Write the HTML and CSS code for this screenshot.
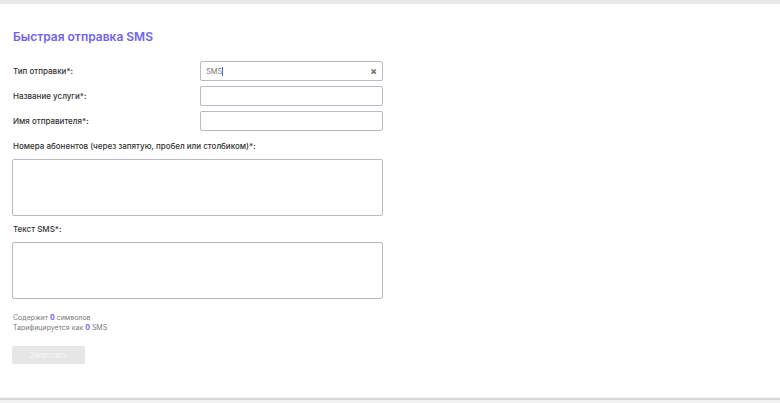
FILE: index.html
```html
<!DOCTYPE html>
<html lang="ru">
<head>
    <meta charset="UTF-8">
    <meta name="viewport" content="width=device-width, initial-scale=1.0">
    <title>Быстрая отправка SMS</title>
    <link rel="stylesheet" href="styles.css">
</head>
<body>
    <div class="top-bar"></div>
    <div class="card">
        <h1>Быстрая отправка SMS</h1>
        <div class="row">
            <label>Тип отправки*:</label>
            <div class="field select">
                <span class="value">SMS</span><span class="caret"></span>
                <span class="clear">&#215;</span>
            </div>
        </div>
        <div class="row">
            <label>Название услуги*:</label>
            <div class="field"></div>
        </div>
        <div class="row">
            <label>Имя отправителя*:</label>
            <div class="field"></div>
        </div>
        <label class="block-label">Номера абонентов (через запятую, пробел или столбиком)*:</label>
        <div class="area"></div>
        <label class="block-label">Текст SMS*:</label>
        <div class="area"></div>
        <div class="stats">
            <div>Содержит <b>0</b> символов</div>
            <div>Тарифицируется как <b>0</b> SMS</div>
        </div>
        <button class="run" disabled>Запустить</button>
    </div>
    <div class="bottom-line"></div>
</body>
</html>
```

FILE: styles.css
```css
body {
    margin: 0;
    font-family: Inter, "Noto Sans", sans-serif;
    background-color: #f2f2f2;
    color: #333;
}

.top-bar {
    height: 4px;
    background-color: #e9e9e9;
}

.card {
    background-color: #fff;
    height: 393px;
    box-sizing: border-box;
    padding: 25px 12px 0;
    display: flex;
    flex-direction: column;
    align-items: flex-start;
}

.bottom-line {
    height: 2px;
    background-color: #d6d6d6;
    margin-top: 1px;
}

h1 {
    margin: 0 0 16px 1px;
    font-size: 12px;
    line-height: 16px;
    font-weight: 600;
    color: #6f62f4;
}

.row {
    display: grid;
    grid-template-columns: 188px 183px;
    align-items: center;
    margin-bottom: 5px;
}

label {
    font-size: 8px;
    line-height: 12px;
    padding-left: 1px;
    color: #333;
    font-weight: 500;
}

.field {
    height: 20px;
    box-sizing: border-box;
    border: 1px solid #b9b9c6;
    border-radius: 2px;
    display: flex;
    align-items: center;
    padding: 0 5px;
}

.field .value {
    font-size: 7.5px;
    color: #777;
}

.field .caret {
    width: 1px;
    height: 9px;
    background-color: #3d6df2;
}

.field .clear {
    margin-left: auto;
    font-size: 10px;
    line-height: 1;
    font-weight: 700;
    color: #666;
}

.block-label {
    margin: 4px 0 7px;
}

.area {
    width: 371px;
    height: 57px;
    box-sizing: border-box;
    border: 1px solid #b9b9c6;
    border-radius: 2px;
}

.area + .block-label {
    margin-top: 7px;
}

.stats {
    margin-top: 14px;
    font-size: 7px;
    line-height: 10px;
    color: #7a7a7a;
    padding-left: 1px;
}

.stats b {
    color: #6f62f4;
    font-weight: 700;
}

.run {
    margin-top: 13px;
    width: 73px;
    height: 18px;
    border: none;
    border-radius: 2px;
    background-color: #e6e6e6;
    color: #f7f7f7;
    font-family: inherit;
    font-size: 7.5px;
    padding: 0;
}
```
